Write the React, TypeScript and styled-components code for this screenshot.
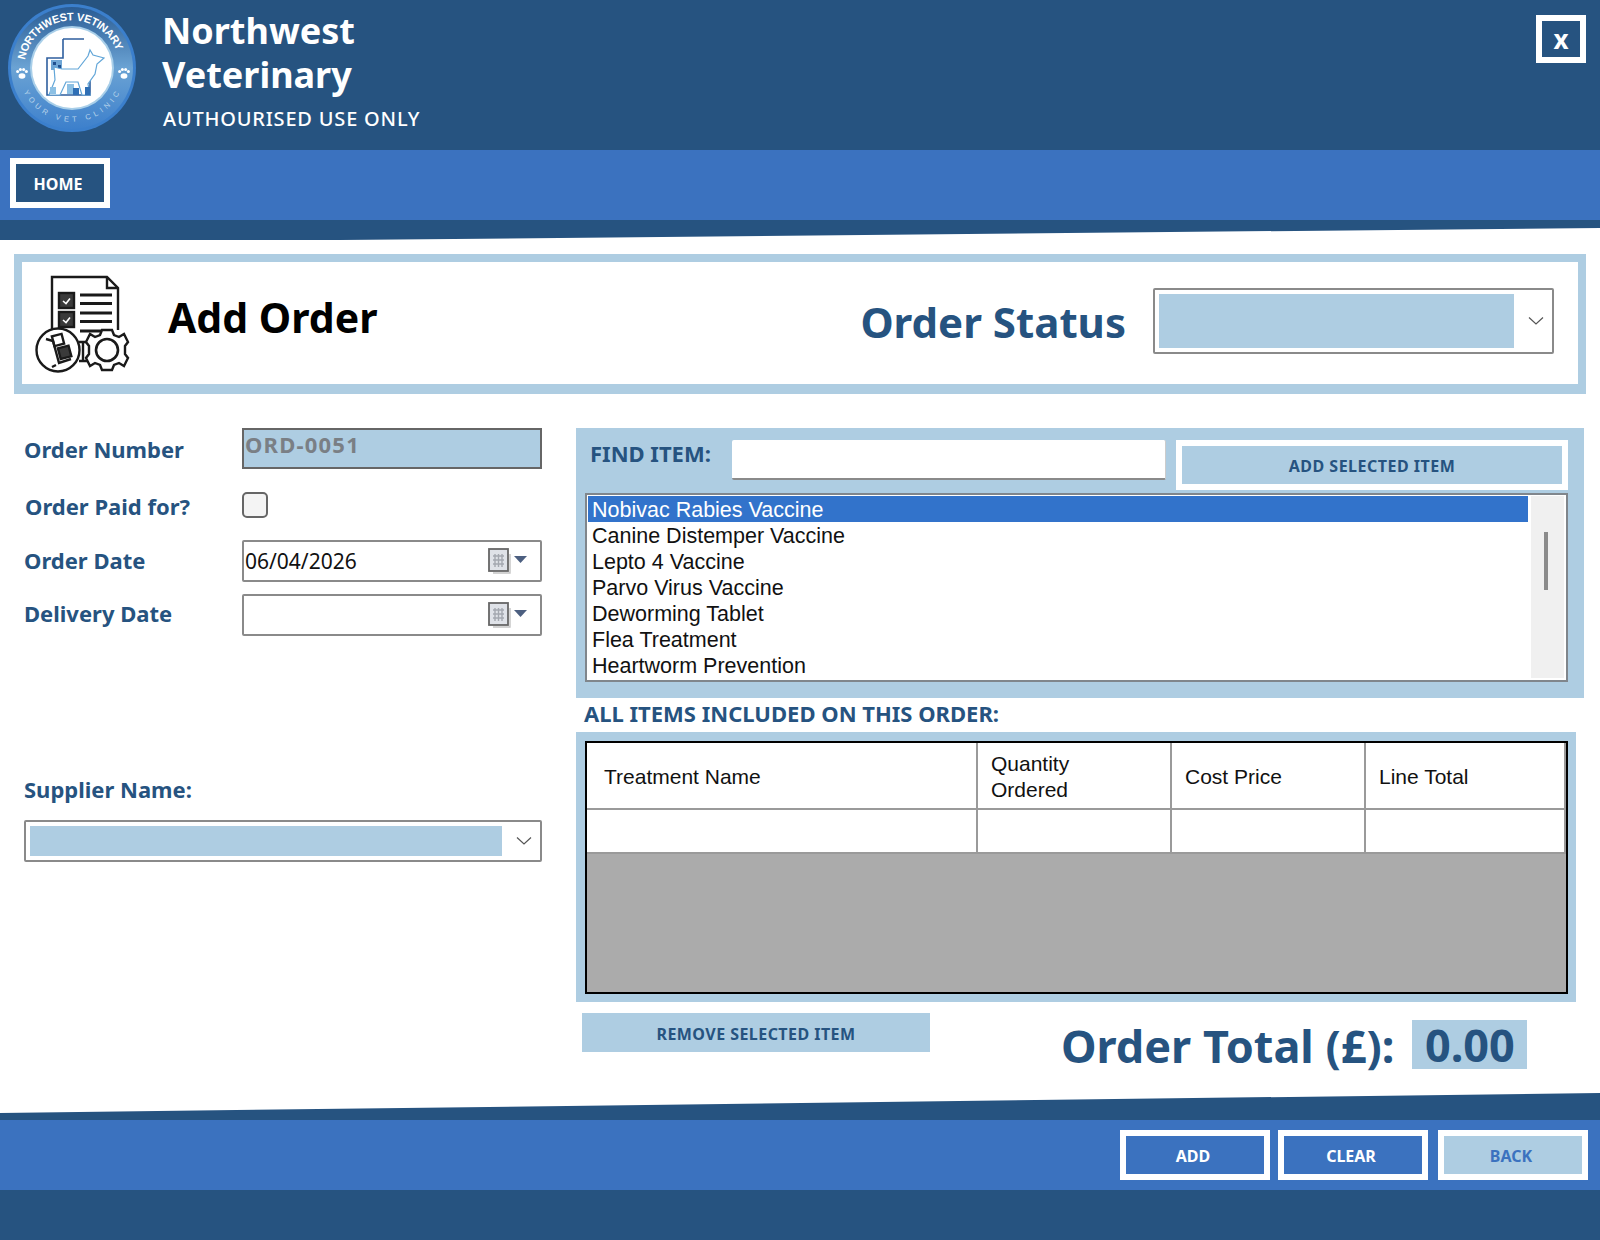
import React from "react";
import styled, { createGlobalStyle } from "styled-components";

const DARK = "#265380";
const BLUE = "#3b72bf";
const PALE = "#aecde2";

const items = [
  "Nobivac Rabies Vaccine",
  "Canine Distemper Vaccine",
  "Lepto 4 Vaccine",
  "Parvo Virus Vaccine",
  "Deworming Tablet",
  "Flea Treatment",
  "Heartworm Prevention",
];

const Paw = ({ x }: { x: number }) => (
  <g fill="#fff">
    <ellipse cx={x} cy="76" rx="3.4" ry="2.8" />
    <circle cx={x - 4.4} cy="71.5" r="1.5" />
    <circle cx={x - 1.6} cy="69.5" r="1.5" />
    <circle cx={x + 1.6} cy="69.5" r="1.5" />
    <circle cx={x + 4.4} cy="71.5" r="1.5" />
  </g>
);

const Logo = () => (
  <LogoSvg viewBox="0 0 140 140">
    <defs>
      <linearGradient id="ring" x1="0" y1="0" x2="0" y2="1">
        <stop offset="0" stopColor="#2a5c94" />
        <stop offset="0.5" stopColor="#6ba3d4" />
        <stop offset="1" stopColor="#3d80cc" />
      </linearGradient>
      <path id="arcTop" d="M25 60 A47.700 47.700 0 0 1 119 60" />
      <path id="arcBottom" d="M22 88 A53.900 53.900 0 0 0 122 88" />
    </defs>
    <circle cx="72" cy="68" r="64" fill="#3b7fcc" />
    <circle cx="72" cy="68" r="61" fill="url(#ring)" />
    <circle cx="72" cy="68" r="42" fill="#a9cfe9" />
    <circle cx="72" cy="68" r="40" fill="#fff" />
    <text fontFamily="'Liberation Sans', sans-serif" fontSize="11" fontWeight="700" fill="#fff">
      <textPath href="#arcTop" textLength="124" lengthAdjust="spacing">
        NORTHWEST VETINARY
      </textPath>
    </text>
    <text fontFamily="'Liberation Sans', sans-serif" fontSize="7.500" fill="#d2e4f3" opacity="0.8">
      <textPath href="#arcBottom" startOffset="4" textLength="118" lengthAdjust="spacing">
        YOUR VET CLINIC
      </textPath>
    </text>
    <Paw x={22} />
    <Paw x={124} />
    <path d="M63 39 H84 M63 39 V58 H47 V95 H90 V78" fill="none" stroke="#2f5f9f" strokeWidth="1.600" />
    <path d="M51 60 H62 V70 H51 Z" fill="#6fa6d6" />
    <path d="M53 62 h3 v3 h-3 Z M58 65 h3 v3 h-3 Z" fill="#1f4f8f" />
    <path
      d="M54 67 L62 69 H78 L88 56 L90 50 L93 55 L104 58 L97 64 L95 74 L88 84 L90 95 H82 L78 82 H66 L60 95 H49 L55 80 Z"
      fill="#fff"
      stroke="#62a6d8"
      strokeWidth="1.200"
    />
    <path d="M67 84 H74 V94 H67 Z M50 87 H56 V94 H50 Z" fill="#8cc0e4" />
    <path d="M85 87 H90 V95 H85 Z M73 88 H79 V95 H73 Z" fill="#2f6fb5" />
  </LogoSvg>
);

const OrderIcon = () => (
  <IconSvg viewBox="0 0 110 110" fill="none" stroke="#1a1a1a" strokeWidth="2.400">
    <path d="M22 64 V9 H77 L88 20 V62" />
    <path d="M77 9 V20 H88" />
    <rect x="29" y="25" width="15" height="15" fill="#3a3a3a" />
    <rect x="29" y="44" width="15" height="15" fill="#3a3a3a" />
    <path d="M33 33 l3 2.500 l4 -5 M33 52 l3 2.500 l4 -5" stroke="#fff" strokeWidth="1.600" />
    <path d="M50 27 H82 M50 35.500 H82 M50 45 H82 M50 53.500 H82 M50 63 H72" strokeWidth="2.800" />
    <circle cx="28" cy="82" r="21.500" fill="#fff" />
    <path d="M16 71 L23 73 L29 95 L41 91 M26 97 l-4 2" />
    <rect x="23" y="67" width="10" height="10" transform="rotate(-15 28 72)" />
    <rect x="29" y="79" width="11" height="11" fill="#3a3a3a" transform="rotate(-15 34 84)" />
    <path d="M49 74 H58 M49 93 H58 M53 74 V93" />
    <path
      d="M72 62 H82 L84 67 L89 69 L94 66 L98 74 L95 78 V86 L98 90 L94 98 L89 95 L84 97 L82 102 H72 L70 97 L65 95 L60 98 L56 90 L59 86 V78 L56 74 L60 66 L65 69 L70 67 Z"
      fill="#fff"
    />
    <circle cx="77" cy="82" r="11" strokeWidth="2.600" />
  </IconSvg>
);

const CalendarIcon = () => (
  <svg width="39" height="26" viewBox="0 0 39 26">
    <rect x="1" y="1" width="19" height="22" fill="#dfe2e8" stroke="#666" strokeWidth="1.800" />
    <path d="M5 8 H16 M5 12 H16 M5 16 H16 M7 6 V19 M10.500 6 V19 M14 6 V19" stroke="#a4a8b0" strokeWidth="1.400" />
    <path d="M5 25 H22 V6" stroke="#c4c4c4" strokeWidth="1.400" fill="none" />
    <path d="M26 8 H39 L32.500 15 Z" fill="#4c5f80" />
  </svg>
);

const Chevron = () => (
  <svg width="16" height="10" viewBox="0 0 16 10" fill="none" stroke="#555" strokeWidth="1.200">
    <path d="M1 1.500 L8 8 L15 1.500" />
  </svg>
);

const App = () => {
  return (
    <Page>
      <GlobalStyle />
      <Header>
        <Logo />
        <Brand>
          <BrandName>Northwest</BrandName>
          <BrandName>Veterinary</BrandName>
          <BrandNote>AUTHOURISED USE ONLY</BrandNote>
        </Brand>
        <CloseBtn>x</CloseBtn>
      </Header>
      <NavBar>
        <HomeBtn>HOME</HomeBtn>
      </NavBar>
      <TopBand />
      <Main>
        <TitlePanel>
          <OrderIcon />
          <Title>Add Order</Title>
          <StatusLabel>Order Status</StatusLabel>
          <StatusCombo>
            <ComboFill />
            <Chevron />
          </StatusCombo>
        </TitlePanel>
        <Columns>
          <LeftCol>
            <Row $top={0}>
              <FieldLabel>Order Number</FieldLabel>
              <OrderNo>ORD-0051</OrderNo>
            </Row>
            <Row $top={20}>
              <FieldLabel $left={1} $drop={2}>
                Order Paid for?
              </FieldLabel>
              <CheckBox />
            </Row>
            <Row $top={19}>
              <FieldLabel $up={3}>Order Date</FieldLabel>
              <DateField>
                <DateText>06/04/2026</DateText>
                <CalendarIcon />
              </DateField>
            </Row>
            <Row $top={12}>
              <FieldLabel $up={4}>Delivery Date</FieldLabel>
              <DateField>
                <DateText />
                <CalendarIcon />
              </DateField>
            </Row>
            <SupplierLabel>Supplier Name:</SupplierLabel>
            <SupplierCombo>
              <ComboFill />
              <Chevron />
            </SupplierCombo>
          </LeftCol>
          <RightCol>
            <FindPanel>
              <FindRow>
                <FindLabel>FIND ITEM:</FindLabel>
                <FindInput />
                <AddItemBtn>ADD SELECTED ITEM</AddItemBtn>
              </FindRow>
              <ListBox>
                <ListRows>
                  {items.map((item, i) => (
                    <ListRow key={item} $selected={i === 0}>
                      {item}
                    </ListRow>
                  ))}
                </ListRows>
                <ScrollTrack>
                  <ScrollThumb />
                </ScrollTrack>
              </ListBox>
            </FindPanel>
            <ItemsLabel>ALL ITEMS INCLUDED ON THIS ORDER:</ItemsLabel>
            <GridPanel>
              <GridBox>
                <HeaderRow>
                  <Cell $left={17}>Treatment Name</Cell>
                  <Cell>
                    <span>Quantity</span>
                    <span>Ordered</span>
                  </Cell>
                  <Cell>Cost Price</Cell>
                  <Cell>Line Total</Cell>
                </HeaderRow>
                <BlankRow>
                  <Cell />
                  <Cell />
                  <Cell />
                  <Cell />
                </BlankRow>
              </GridBox>
            </GridPanel>
            <TotalRow>
              <RemoveBtn>REMOVE SELECTED ITEM</RemoveBtn>
              <TotalLabel>Order Total (£):</TotalLabel>
              <TotalValue>0.00</TotalValue>
            </TotalRow>
          </RightCol>
        </Columns>
      </Main>
      <BottomBand />
      <FootBar>
        <FootBtn>ADD</FootBtn>
        <FootBtn>CLEAR</FootBtn>
        <FootBtn $pale>BACK</FootBtn>
      </FootBar>
      <FootEnd />
    </Page>
  );
};

export default App;

const GlobalStyle = createGlobalStyle`
  html, body {
    margin: 0;
    padding: 0;
    background: #fff;
  }
  * {
    box-sizing: border-box;
  }
`;

const Page = styled.div`
  width: 1600px;
  height: 1240px;
  overflow: hidden;
  display: flex;
  flex-direction: column;
  background: #fff;
  font-family: "Noto Sans", "Open Sans", sans-serif;
`;

const Header = styled.div`
  height: 150px;
  background: ${DARK};
  display: flex;
  align-items: flex-start;
`;

const LogoSvg = styled.svg`
  width: 140px;
  height: 140px;
  flex-shrink: 0;
`;

const Brand = styled.div`
  margin-left: 22px;
  padding-top: 9px;
  display: flex;
  flex-direction: column;
  flex: 1;
  color: #fff;
`;

const BrandName = styled.div`
  font-size: 36px;
  line-height: 44px;
  font-weight: 700;
`;

const BrandNote = styled.div`
  margin-top: 9px;
  margin-left: 1px;
  font-size: 20px;
  line-height: 26px;
  font-weight: 500;
  letter-spacing: 0.8px;
`;

const CloseBtn = styled.div`
  width: 50px;
  height: 48px;
  margin: 15px 14px 0 0;
  border: 6px solid #fff;
  background: ${DARK};
  color: #fff;
  font-size: 26px;
  font-weight: 700;
  display: flex;
  align-items: center;
  justify-content: center;
`;

const NavBar = styled.div`
  height: 70px;
  background: ${BLUE};
  padding: 8px 10px;
`;

const HomeBtn = styled.div`
  width: 100px;
  height: 50px;
  border: 6px solid #fff;
  padding: 2px 4px 0 0;
  background: ${DARK};
  color: #fff;
  font-size: 16px;
  font-weight: 700;
  display: flex;
  align-items: center;
  justify-content: center;
`;

const TopBand = styled.div`
  height: 20px;
  background: ${DARK};
  clip-path: polygon(0 0, 100% 0, 100% 8px, 340px 100%, 0 100%);
`;

const Main = styled.div`
  height: 853px;
  padding: 14px 14px 0;
  display: flex;
  flex-direction: column;
`;

const TitlePanel = styled.div`
  height: 140px;
  border: 8px solid ${PALE};
  border-bottom-width: 10px;
  display: flex;
  align-items: center;
  padding: 0 24px 0 14px;
`;

const IconSvg = styled.svg`
  width: 110px;
  height: 110px;
  flex-shrink: 0;
  margin-left: -6px;
`;

const Title = styled.div`
  margin: -12px 0 0 28px;
  flex: 1;
  font-size: 41px;
  font-weight: 700;
  color: #000;
`;

const StatusLabel = styled.div`
  font-size: 42px;
  font-weight: 700;
  color: ${DARK};
  margin: -4px 27px 0 0;
`;

const StatusCombo = styled.div`
  width: 401px;
  height: 66px;
  border: 2px solid #8a8a8a;
  border-radius: 2px;
  padding: 4px 8px 4px 4px;
  display: flex;
  align-items: center;
  gap: 14px;
  margin-top: -5px;
`;

const ComboFill = styled.div`
  flex: 1;
  height: 100%;
  background: ${PALE};
`;

const Columns = styled.div`
  display: flex;
  margin-top: 34px;
`;

const LeftCol = styled.div`
  width: 518px;
  margin-left: 10px;
  display: flex;
  flex-direction: column;
`;

const Row = styled.div<{ $top: number }>`
  display: flex;
  align-items: center;
  margin-top: ${(p) => p.$top}px;
`;

const FieldLabel = styled.div<{ $up?: number; $left?: number; $drop?: number }>`
  width: 218px;
  padding-top: ${(p) => p.$drop ?? 0}px;
  padding-bottom: ${(p) => p.$up ?? 0}px;
  padding-left: ${(p) => p.$left ?? 0}px;
  font-size: 22px;
  font-weight: 700;
  color: ${DARK};
`;

const OrderNo = styled.div`
  width: 300px;
  height: 41px;
  background: ${PALE};
  border: 2px solid #666;
  padding: 0 2px 9px 1px;
  color: #7a7f85;
  font-size: 22px;
  font-weight: 700;
  letter-spacing: 1.2px;
  display: flex;
  align-items: center;
`;

const CheckBox = styled.div`
  width: 26px;
  height: 26px;
  border: 2px solid #666;
  border-radius: 5px;
  background: #f4f4f4;
`;

const DateField = styled.div`
  width: 300px;
  height: 42px;
  border: 2px solid #8a8a8a;
  border-radius: 2px;
  display: flex;
  align-items: center;
  padding: 0 13px 0 1px;
`;

const DateText = styled.div`
  flex: 1;
  font-size: 21px;
  color: #111;
`;

const SupplierLabel = styled.div`
  margin-top: 137px;
  font-size: 22px;
  font-weight: 700;
  color: ${DARK};
  line-height: 32px;
`;

const SupplierCombo = styled(StatusCombo)`
  width: 518px;
  height: 42px;
  margin-top: 15px;
`;

const RightCol = styled.div`
  width: 1008px;
  margin-left: 34px;
  display: flex;
  flex-direction: column;
`;

const FindPanel = styled.div`
  height: 270px;
  background: ${PALE};
  padding: 12px 16px 16px 9px;
  display: flex;
  flex-direction: column;
`;

const FindRow = styled.div`
  display: flex;
  align-items: flex-start;
  height: 53px;
`;

const FindLabel = styled.div`
  width: 147px;
  padding-left: 5px;
  font-size: 22px;
  font-weight: 700;
  color: ${DARK};
  line-height: 26px;
`;

const FindInput = styled.div`
  width: 434px;
  height: 40px;
  background: #fff;
  border-bottom: 2px solid #8a8a8a;
  border-right: 1px solid #ccc;
  border-radius: 2px;
`;

const AddItemBtn = styled.div`
  width: 392px;
  height: 50px;
  margin-left: 10px;
  border: 6px solid #fff;
  padding-top: 2px;
  background: ${PALE};
  color: ${DARK};
  font-size: 16px;
  font-weight: 700;
  letter-spacing: 0.5px;
  display: flex;
  align-items: center;
  justify-content: center;
`;

const ListBox = styled.div`
  height: 189px;
  background: #fff;
  border: 2px solid #80868c;
  padding: 1px 2px 2px 1px;
  display: flex;
  gap: 3px;
`;

const ListRows = styled.div`
  flex: 1;
  display: flex;
  flex-direction: column;
`;

const ListRow = styled.div<{ $selected?: boolean }>`
  height: 26px;
  line-height: 28px;
  padding-left: 4px;
  font-family: "Liberation Sans", sans-serif;
  font-size: 21.5px;
  color: ${(p) => (p.$selected ? "#fff" : "#111")};
  background: ${(p) => (p.$selected ? "#3273cb" : "transparent")};
`;

const ScrollTrack = styled.div`
  width: 33px;
  background: #f0f0f0;
  padding: 36px 0 0 13px;
`;

const ScrollThumb = styled.div`
  width: 4px;
  height: 58px;
  background: #8b8b8b;
`;

const ItemsLabel = styled.div`
  height: 34px;
  padding-left: 8px;
  font-size: 22px;
  line-height: 30px;
  font-weight: 700;
  color: ${DARK};
`;

const GridPanel = styled.div`
  width: 1000px;
  height: 270px;
  background: ${PALE};
  padding: 9px 8px 8px 9px;
`;

const GridBox = styled.div`
  height: 100%;
  background: #ababab;
  border: 2px solid #000;
`;

const HeaderRow = styled.div`
  height: 67px;
  display: grid;
  grid-template-columns: 391px 194px 194px 200px;
  background: #fff;
  border-bottom: 2px solid #9a9a9a;

  & > div {
    padding-top: 2px;
  }
`;

const BlankRow = styled(HeaderRow)`
  height: 44px;
`;

const Cell = styled.div<{ $left?: number }>`
  display: flex;
  flex-direction: column;
  justify-content: center;
  padding-left: ${(p) => p.$left ?? 13}px;
  font-family: "Liberation Sans", sans-serif;
  font-size: 21px;
  line-height: 26px;
  color: #111;
  border-right: 2px solid #9a9a9a;
`;

const TotalRow = styled.div`
  display: flex;
  align-items: flex-start;
  margin-top: 11px;
  margin-left: 6px;
`;

const RemoveBtn = styled.div`
  width: 348px;
  height: 39px;
  padding-top: 2px;
  background: ${PALE};
  color: ${DARK};
  font-size: 16px;
  font-weight: 700;
  letter-spacing: 0.45px;
  display: flex;
  align-items: center;
  justify-content: center;
`;

const TotalLabel = styled.div`
  margin: 2px 0 0 131px;
  font-size: 45px;
  line-height: 62px;
  font-weight: 700;
  color: ${DARK};
`;

const TotalValue = styled.div`
  margin: 7px 0 0 18px;
  width: 115px;
  height: 49px;
  background: ${PALE};
  color: ${DARK};
  font-size: 45px;
  line-height: 50px;
  font-weight: 700;
  text-align: center;
`;

const BottomBand = styled.div`
  height: 27px;
  background: ${DARK};
  clip-path: polygon(0 20px, 100% 0, 100% 100%, 0 100%);
`;

const FootBar = styled.div`
  height: 70px;
  background: ${BLUE};
  display: flex;
  justify-content: flex-end;
  align-items: center;
  gap: 8px;
  padding-right: 12px;
`;

const FootBtn = styled.div<{ $pale?: boolean }>`
  width: 150px;
  height: 50px;
  margin-left: ${(p) => (p.$pale ? 2 : 0)}px;
  border: 6px solid #fff;
  padding: 2px 4px 0 0;
  background: ${(p) => (p.$pale ? PALE : BLUE)};
  color: ${(p) => (p.$pale ? BLUE : "#fff")};
  font-size: 16px;
  font-weight: 700;
  display: flex;
  align-items: center;
  justify-content: center;
`;

const FootEnd = styled.div`
  flex: 1;
  background: ${DARK};
`;
